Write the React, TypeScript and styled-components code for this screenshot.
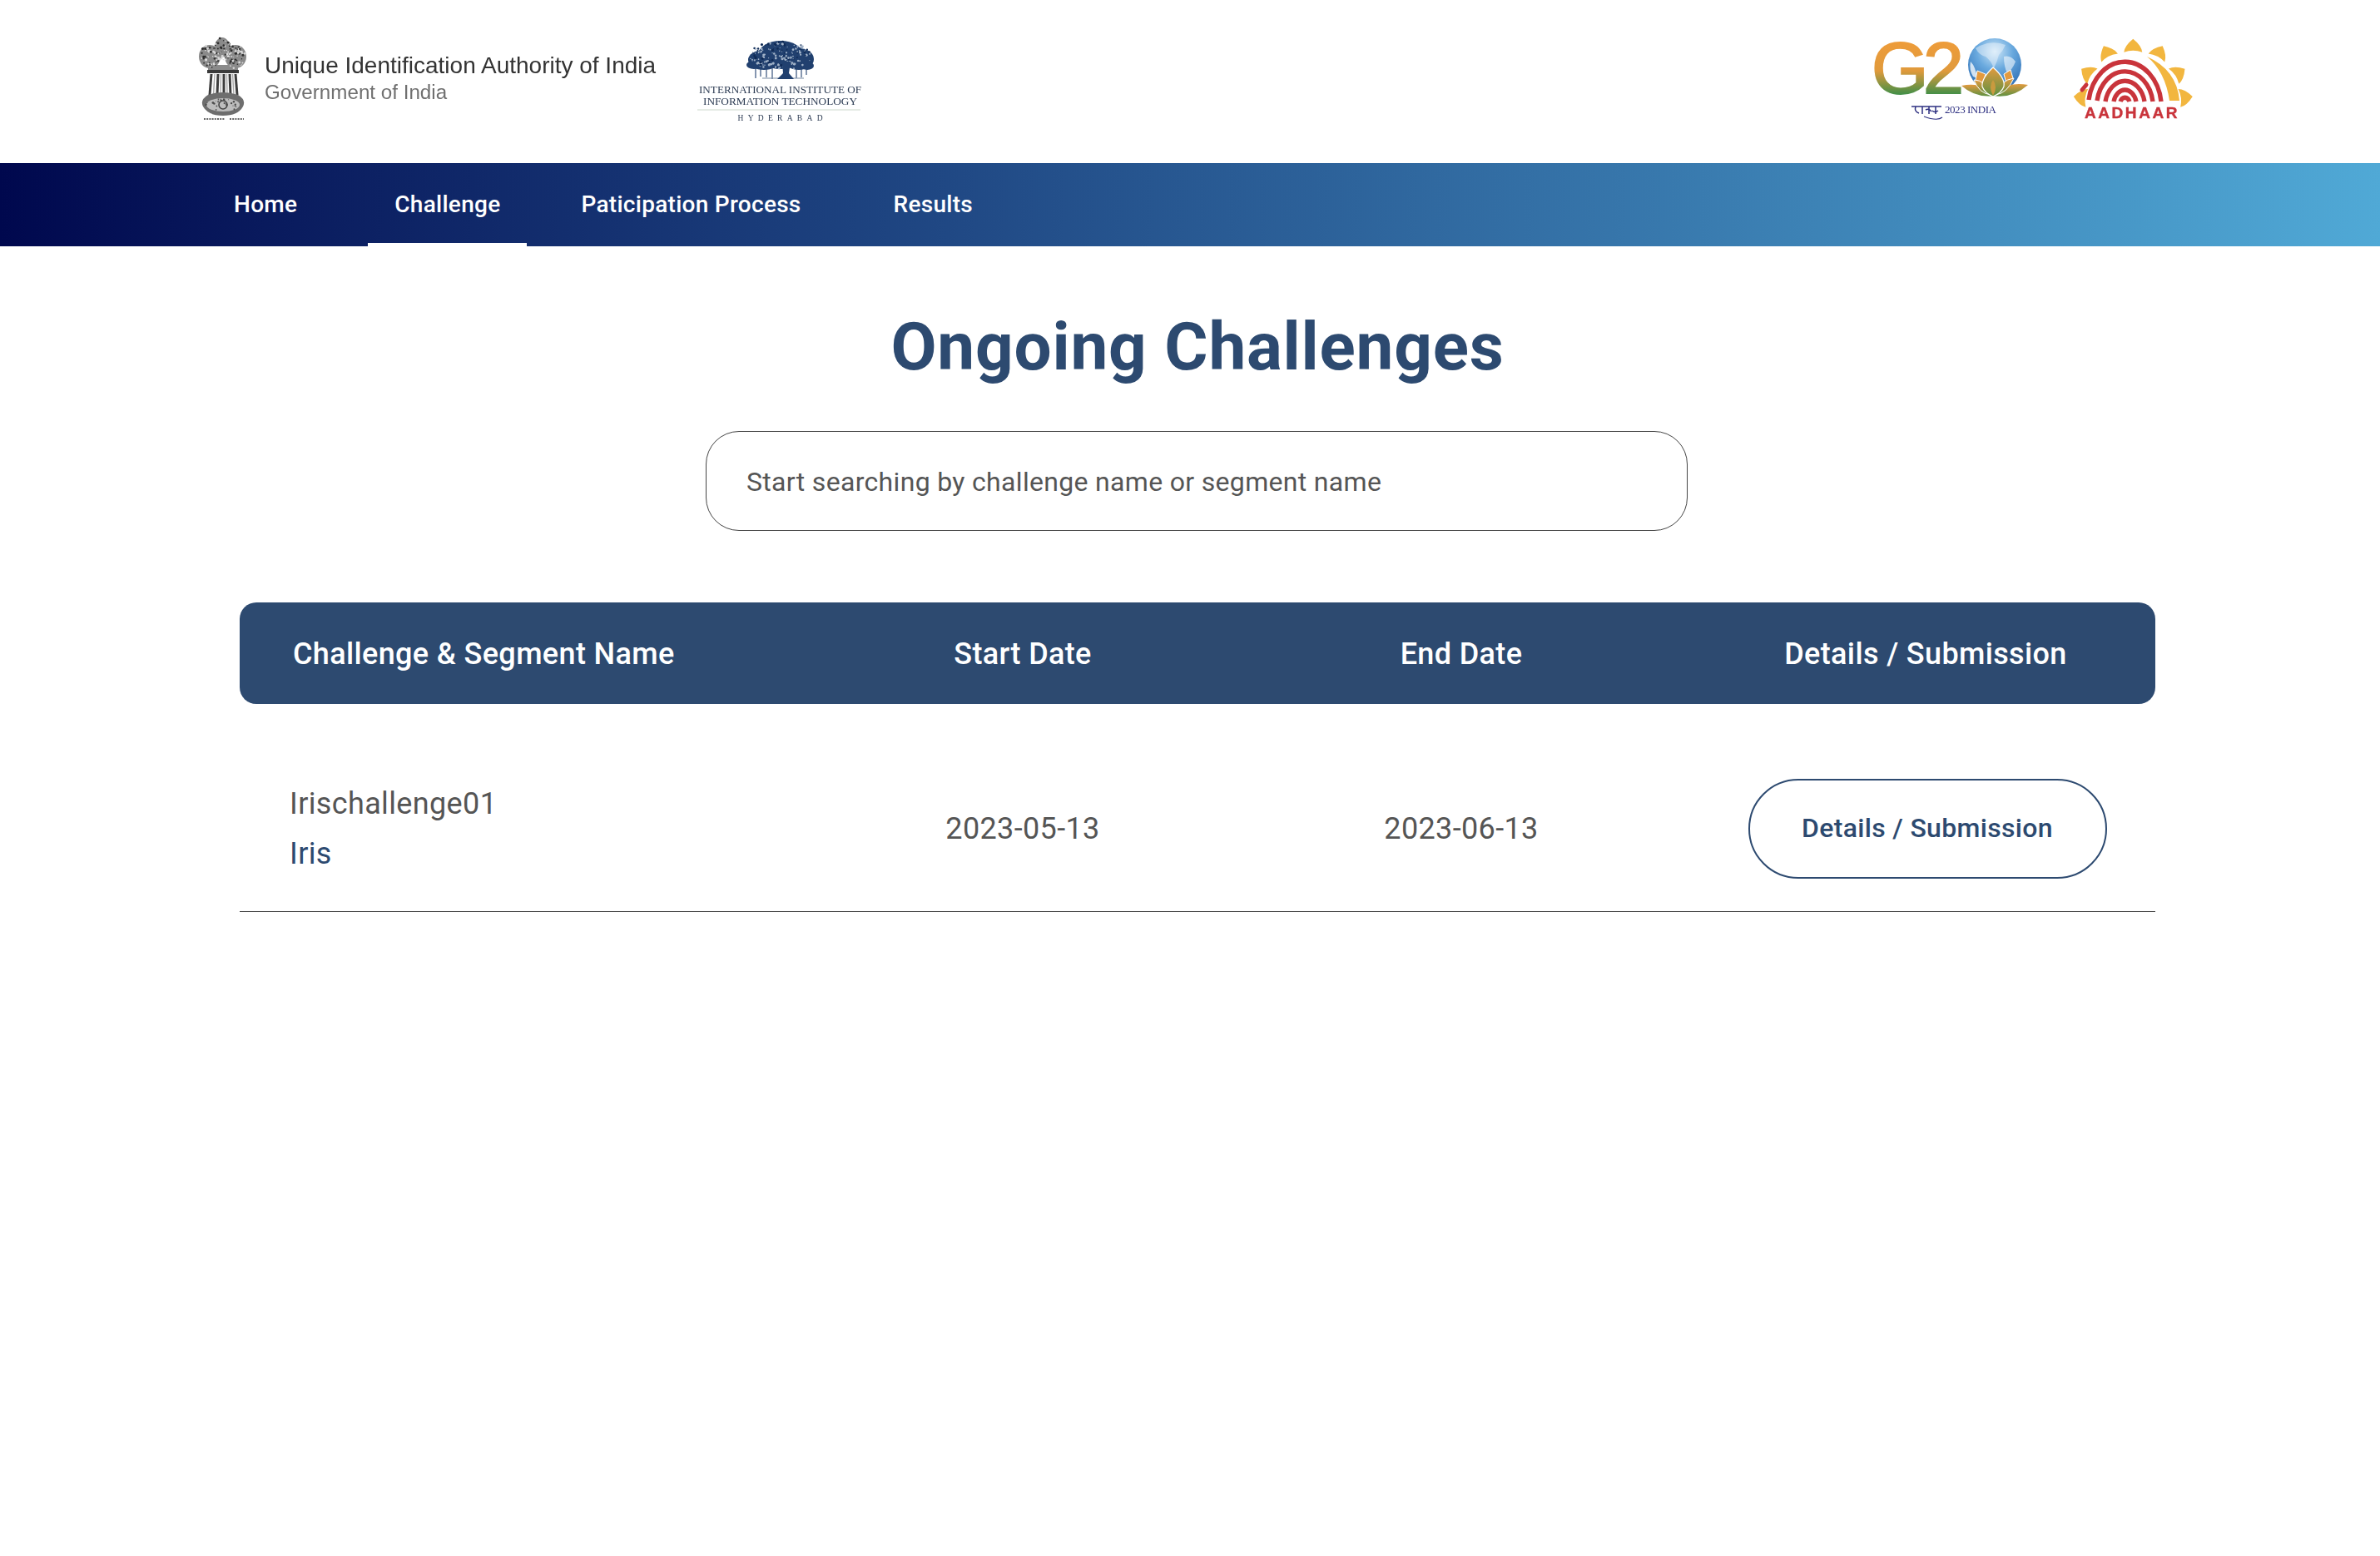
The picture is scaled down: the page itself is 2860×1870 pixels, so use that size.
import React from "react";
import styled, { createGlobalStyle } from "styled-components";

const Global = createGlobalStyle`
  html, body { margin: 0; padding: 0; background: #fff; }
  body { font-family: Roboto, "Liberation Sans", sans-serif; }
`;

const Page = styled.div`
  width: 2860px;
  min-height: 1870px;
  background: #fff;
`;

const Header = styled.header`
  height: 196px;
  box-sizing: border-box;
  padding: 44px 224px 0 238px;
  display: flex;
  justify-content: space-between;
  align-items: flex-start;
`;

const LogoGroup = styled.div`
  display: flex;
  align-items: flex-start;
`;

const Logo = styled.svg<{ $left?: number }>`
  display: block;
  flex: none;
  overflow: visible;
  margin-left: ${(p) => p.$left ?? 0}px;
  filter: blur(0.35px);
`;

const AuthorityText = styled.div`
  margin-left: 20px;
  padding-top: 19px;
  width: 470px;
  font-family: "Liberation Sans", Arial, sans-serif;
  filter: blur(0.3px);
`;

const AuthorityName = styled.div`
  font-size: 28px;
  line-height: 32px;
  color: #333;
  white-space: nowrap;
`;

const AuthorityGov = styled.div`
  font-size: 24.2px;
  line-height: 32px;
  color: #707070;
  white-space: nowrap;
`;

const Nav = styled.nav`
  height: 100px;
  padding-left: 249px;
  display: flex;
  align-items: stretch;
  background: linear-gradient(90deg, #00084e 0%, #50a9d6 100%);
`;

const NavItem = styled.a<{ $active?: boolean; $gap?: number }>`
  display: flex;
  align-items: center;
  padding: 0 32px 2px;
  margin-left: ${(p) => p.$gap ?? 0}px;
  font-size: 28px;
  font-weight: 500;
  letter-spacing: 0.01em;
  color: #fff;
  box-sizing: border-box;
  border-bottom: 4px solid ${(p) => (p.$active ? "#fff" : "transparent")};
  border-top: 4px solid transparent;
`;

const Main = styled.main`
  width: 2302px;
  margin-left: 288px;
  display: flex;
  flex-direction: column;
  align-items: center;
`;

const Title = styled.h1`
  margin: 74px 0 0;
  font-size: 80px;
  line-height: 94px;
  font-weight: 700;
  letter-spacing: 0.01em;
  color: #2d4a70;
`;

const Search = styled.input`
  box-sizing: border-box;
  margin-top: 54px;
  margin-left: -2px;
  width: 1180px;
  height: 120px;
  padding: 2px 48px 0;
  border: 1px solid #444;
  border-radius: 40px;
  outline: none;
  background: #fff;
  font-family: Roboto, sans-serif;
  font-size: 32px;
  letter-spacing: 0.01em;
  color: #555;
  &::placeholder { color: #555; opacity: 1; }
`;

const Table = styled.section`
  align-self: stretch;
  margin-top: 86px;
`;

const COLUMNS = "696px 490px 564px 552px";

const HeadRow = styled.div`
  display: grid;
  grid-template-columns: ${COLUMNS};
  align-items: center;
  height: 122px;
  padding-top: 2px;
  box-sizing: border-box;
  background: #2d4a70;
  border-radius: 20px;
`;

const HeadCell = styled.div<{ $left?: boolean }>`
  font-size: 36px;
  font-weight: 500;
  letter-spacing: 0.01em;
  color: #fff;
  text-align: ${(p) => (p.$left ? "left" : "center")};
  padding-left: ${(p) => (p.$left ? "64px" : "0")};
`;

const Row = styled.div`
  display: grid;
  grid-template-columns: ${COLUMNS};
  align-items: center;
  margin-top: 50px;
  padding: 40px 0 39px;
  border-bottom: 1px solid #444;
`;

const NameCell = styled.div`
  padding-left: 60px;
  font-size: 36px;
  line-height: 60px;
  letter-spacing: 0.01em;
`;

const ChallengeName = styled.div`
  color: #555;
`;

const SegmentName = styled.div`
  color: #2d4a70;
`;

const DateCell = styled.div`
  font-size: 36px;
  letter-spacing: 0.01em;
  color: #555;
  text-align: center;
`;

const ActionCell = styled.div`
  display: flex;
  justify-content: center;
  padding-left: 4px;
`;

const DetailsButton = styled.button`
  box-sizing: border-box;
  width: 431px;
  height: 120px;
  padding: 0 0 2px;
  background: #fff;
  border: 2px solid #2d4a70;
  border-radius: 60px;
  font-family: Roboto, sans-serif;
  font-size: 32px;
  font-weight: 500;
  letter-spacing: 0.01em;
  color: #2d4a70;
`;

function speckle(seed: number, n: number, x: number, y: number, w: number, h: number) {
  let s = seed;
  const r = () => {
    s = (s * 16807) % 2147483647;
    return s / 2147483647;
  };
  const out: { x: number; y: number; r: number }[] = [];
  while (out.length < n) {
    const a = r() * 2 - 1;
    const b = r() * 2 - 1;
    if (a * a + b * b > 1) continue;
    out.push({ x: x + w / 2 + (a * w) / 2, y: y + h / 2 + (b * h) / 2, r: 0.5 + r() * 1.1 });
  }
  return out;
}

const Emblem = () => (
  <Logo width={60} height={104} viewBox="0 0 60 104">
    <g fill="#8a8a8a">
      <ellipse cx="29" cy="13" rx="9" ry="12" />
      <ellipse cx="14" cy="24" rx="13" ry="14" />
      <ellipse cx="45" cy="24" rx="13" ry="14" />
      <rect x="12" y="34" width="36" height="9" />
    </g>
    {[
      ...speckle(11, 50, 2, 10, 24, 28),
      ...speckle(37, 50, 33, 10, 24, 28),
      ...speckle(91, 40, 19, 1, 20, 28),
    ].map((d, i) => (
      <circle key={i} cx={d.x} cy={d.y} r={d.r} fill={i % 2 ? "#2e2e2e" : "#d9d9d9"} />
    ))}
    <rect x="11" y="40" width="38" height="4" fill="#3a3a3a" />
    <g stroke="#3d3d3d" strokeWidth="3" fill="none">
      <path d="M16 45 L14 70" />
      <path d="M24 45 L23 70" />
      <path d="M31 45 L31 70" />
      <path d="M38 45 L39 70" />
      <path d="M45 45 L47 70" />
    </g>
    <g stroke="#a8a8a8" strokeWidth="1.4" fill="none">
      <path d="M20 45 L18.5 70" />
      <path d="M27.5 45 L27 70" />
      <path d="M34.5 45 L35 70" />
      <path d="M41.5 45 L43 70" />
    </g>
    <path d="M12 70 Q30 64 48 70 Q58 76 54 84 Q48 95 30 95 Q12 95 6 84 Q2 76 12 70 Z" fill="#6e6e6e" />
    <ellipse cx="30" cy="82" rx="20" ry="8" fill="#bdbdbd" />
    <circle cx="30" cy="82" r="5" fill="none" stroke="#444" strokeWidth="1.6" />
    {speckle(53, 30, 9, 75, 42, 14).map((d, i) => (
      <circle key={i} cx={d.x} cy={d.y} r={d.r * 0.8} fill="#4a4a4a" />
    ))}
    <g stroke="#666" strokeWidth="2" strokeDasharray="2 1.2">
      <path d="M7 99 H32" />
      <path d="M38 99 H55" />
    </g>
  </Logo>
);

const IiitLogo = () => (
  <Logo $left={50} width={200} height={106} viewBox="0 0 200 106">
    <g fill="#21406f">
      <ellipse cx="100" cy="22" rx="27" ry="17" />
      <ellipse cx="80" cy="28" rx="19" ry="12" />
      <ellipse cx="122" cy="27" rx="18" ry="13" />
      <ellipse cx="68" cy="34" rx="9" ry="5" />
      <ellipse cx="132" cy="35" rx="8" ry="5" />
    </g>
    {speckle(17, 170, 63, 6, 74, 34).map((d, i) => (
      <circle key={i} cx={d.x} cy={d.y} r={d.r} fill={i % 3 ? "#9fb0c6" : "#0f2a55"} />
    ))}
    <g stroke="#21406f" strokeWidth="1.1" fill="none">
      <path d="M70 38 V50" />
      <path d="M76 38 V48" />
      <path d="M83 38 V49" />
      <path d="M90 38 V51" />
      <path d="M119 38 V50" />
      <path d="M125 38 V49" />
      <path d="M131 38 V46" />
      <path d="M78 50 H128" stroke="#7d8da5" />
    </g>
    <path d="M102 30 L112 30 L110 44 L116 51 L96 51 L103 44 Z" fill="#21406f" />
    <g fontFamily="'Liberation Serif', serif" fill="#2b3a52" textAnchor="middle">
      <text x="99.5" y="68" fontSize="13.5" textLength="195" lengthAdjust="spacingAndGlyphs">INTERNATIONAL INSTITUTE OF</text>
      <text x="99.5" y="82" fontSize="13.5" textLength="185" lengthAdjust="spacingAndGlyphs">INFORMATION TECHNOLOGY</text>
      <text x="99.5" y="101" fontSize="9.5" textLength="102">HYDERABAD</text>
    </g>
    <path d="M0 88 H196" stroke="#cdd8cb" strokeWidth="1" />
  </Logo>
);

const G20Logo = () => (
  <Logo width={190} height={106} viewBox="0 0 190 106">
    <defs>
      <linearGradient id="g2Fill" gradientUnits="userSpaceOnUse" x1="0" y1="6" x2="0" y2="70">
        <stop offset="0" stopColor="#ee9c3a" />
        <stop offset="0.55" stopColor="#e09a3c" />
        <stop offset="1" stopColor="#3f8f48" />
      </linearGradient>
      <radialGradient id="globeFill" cx="0.5" cy="0.25" r="0.75">
        <stop offset="0" stopColor="#cfe7f8" />
        <stop offset="0.45" stopColor="#69a9de" />
        <stop offset="1" stopColor="#2c6db4" />
      </radialGradient>
      <linearGradient id="lotusFill" x1="0" y1="0" x2="0" y2="1">
        <stop offset="0" stopColor="#e39a3f" />
        <stop offset="1" stopColor="#5d9142" />
      </linearGradient>
    </defs>
    <text x="-1" y="68" fontFamily="'Liberation Sans', sans-serif" fontSize="88" letterSpacing="-6.5" fill="url(#g2Fill)" stroke="url(#g2Fill)" strokeWidth="2">G2</text>
    <circle cx="147" cy="34" r="32" fill="url(#globeFill)" />
    <g fill="#f4f9fd">
      <path d="M138 8 Q150 6 160 10 Q157 17 152 22 Q150 30 146 38 Q142 28 136 24 Q128 22 124 14 Q130 10 138 8 Z" opacity="0.45" />
      <path d="M158 24 Q166 22 172 30 Q168 40 162 44 Q158 36 158 24 Z" opacity="0.6" />
      <path d="M118 30 Q124 36 126 50 L121 48 Q116 40 118 30 Z" opacity="0.8" />
    </g>
    <path d="M126 41 L136 45 L133 56 L124 52 Z" fill="#e39a3f" stroke="#fff" strokeWidth="1" />
    <path d="M166 40 L158 45 L161 56 L169 50 Z" fill="#e39a3f" stroke="#fff" strokeWidth="1" />
    <path d="M107 59 Q121 56 133 60 Q142 66 146 71 Q124 74 107 59 Z" fill="url(#lotusFill)" />
    <path d="M187 58 Q172 55 158 60 Q149 66 144 71 Q168 75 187 58 Z" fill="url(#lotusFill)" />
    <path d="M122 52 Q136 52 142 70 Q128 68 122 52 Z" fill="url(#lotusFill)" stroke="#fff" strokeWidth="1" />
    <path d="M170 50 Q154 52 148 70 Q162 68 170 50 Z" fill="url(#lotusFill)" stroke="#fff" strokeWidth="1" />
    <path d="M145 37 Q160 50 158 60 Q155 68 145 72 Q135 68 132 60 Q131 50 145 37 Z" fill="url(#lotusFill)" stroke="#fff" strokeWidth="1.2" />
    <path d="M145 52 Q151 60 145 71 Q139 60 145 52 Z" fill="#c99a3f" />
    <g stroke="#2d2f80" strokeWidth="1.5" fill="none">
      <path d="M47 84 H83" />
      <path d="M52 84 Q50 90 56 92 M60 84 V93 M68 84 V93 M76 84 V93 M64 88 Q68 86 71 90 M72 89 Q75 92 79 89" />
      <path d="M62 96 Q78 102 84 97" strokeWidth="1.2" />
    </g>
    <text x="87" y="92" fontFamily="'Liberation Serif', serif" fontSize="13" fill="#2d2f80" textLength="62">2023 INDIA</text>
  </Logo>
);

const SUN_PETALS = [
  { angle: -83, inset: 6 },
  { angle: -56, inset: 3 },
  { angle: -27, inset: 0 },
  { angle: 0, inset: 0 },
  { angle: 27, inset: 0 },
  { angle: 56, inset: 3 },
  { angle: 83, inset: 6 },
];

const AadhaarLogo = () => (
  <Logo $left={50} width={146} height={102} viewBox="0 0 146 102">
    <g fill="#f2b63f" transform="translate(73.3 80.7)">
      {SUN_PETALS.map((p) => (
        <path
          key={p.angle}
          transform={`rotate(${p.angle}) translate(0 ${p.inset})`}
          d="M0 -78 Q10 -70 11 -62 Q0 -66 -11 -62 Q-10 -70 0 -78 Z"
        />
      ))}
    </g>
    <path d="M90 24 Q126 40 129 77 L117 77 Q112 42 90 24 Z" fill="#f2b63f" />
    <g stroke="#c9343b" strokeWidth="5.4" fill="none">
      <path d="M20 76 A44 55 0 0 1 107 78" />
      <path d="M30 77 A34 43 0 0 1 97 78" />
      <path d="M40 78 A24 31 0 0 1 87 78" />
      <path d="M50 78 A14 19 0 0 1 77 78" />
      <path d="M58 78 A6 8 0 0 1 69 78" />
    </g>
    <path d="M12 64 L17 58" stroke="#c9343b" strokeWidth="5" strokeLinecap="round" />
    <text x="72" y="98" textAnchor="middle" fontFamily="'Liberation Sans', sans-serif" fontSize="19" fontWeight="700" letterSpacing="2.6" stroke="#c9343b" strokeWidth="0.4" fill="#c9343b">AADHAAR</text>
  </Logo>
);

export default function App() {
  return (
    <Page>
      <Global />
      <Header>
        <LogoGroup>
          <Emblem />
          <AuthorityText>
            <AuthorityName>Unique Identification Authority of India</AuthorityName>
            <AuthorityGov>Government of India</AuthorityGov>
          </AuthorityText>
          <IiitLogo />
        </LogoGroup>
        <LogoGroup>
          <G20Logo />
          <AadhaarLogo />
        </LogoGroup>
      </Header>
      <Nav>
        <NavItem>Home</NavItem>
        <NavItem $active $gap={53}>Challenge</NavItem>
        <NavItem $gap={33}>Paticipation Process</NavItem>
        <NavItem $gap={47}>Results</NavItem>
      </Nav>
      <Main>
        <Title>Ongoing Challenges</Title>
        <Search placeholder="Start searching by challenge name or segment name" />
        <Table>
          <HeadRow>
            <HeadCell $left>Challenge &amp; Segment Name</HeadCell>
            <HeadCell>Start Date</HeadCell>
            <HeadCell>End Date</HeadCell>
            <HeadCell>Details / Submission</HeadCell>
          </HeadRow>
          <Row>
            <NameCell>
              <ChallengeName>Irischallenge01</ChallengeName>
              <SegmentName>Iris</SegmentName>
            </NameCell>
            <DateCell>2023-05-13</DateCell>
            <DateCell>2023-06-13</DateCell>
            <ActionCell>
              <DetailsButton>Details / Submission</DetailsButton>
            </ActionCell>
          </Row>
        </Table>
      </Main>
    </Page>
  );
}
